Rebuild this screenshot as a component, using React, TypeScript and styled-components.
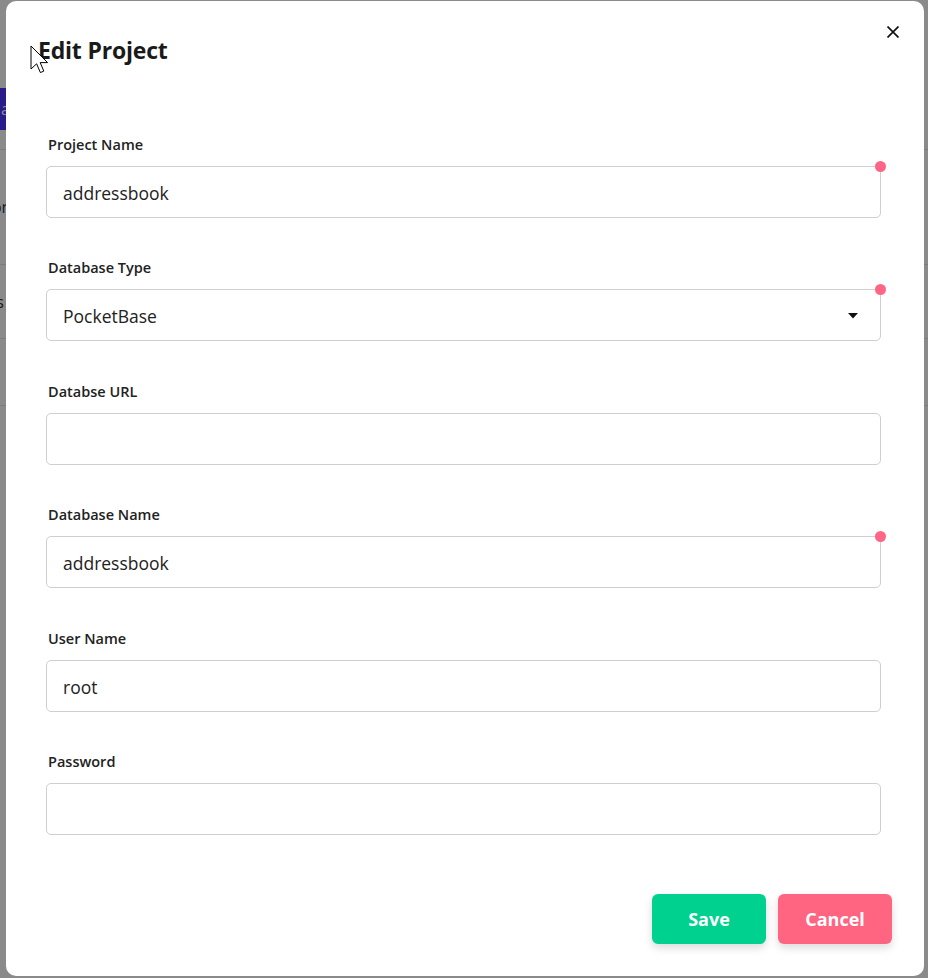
import { createGlobalStyle, styled } from "styled-components";

const GlobalStyle = createGlobalStyle`
  html, body {
    margin: 0;
    padding: 0;
  }
  body {
    font-family: "Open Sans", "Noto Sans", "Liberation Sans", sans-serif;
    color: #222;
    background: #fff;
  }
`;

const Page = styled.div`
  min-height: 978px;
  background: #fff;
`;

const PageHeader = styled.div`
  height: 150px;
  padding-top: 88px;
  box-sizing: border-box;
  border-bottom: 1px solid #e6e6e6;
`;

const PrimaryButton = styled.div`
  display: inline-flex;
  align-items: center;
  justify-content: flex-end;
  height: 42px;
  width: 90px;
  margin-left: -80px;
  background: #4e30ff;
  color: #fff;
  font-size: 16px;
`;

const TableRow = styled.div<{ $h: number }>`
  height: ${(p) => p.$h}px;
  border-bottom: 1px solid #e6e6e6;
  display: flex;
  align-items: center;
  margin-left: -40px;
  font-size: 16px;
  color: #333;
`;

const Overlay = styled.div`
  position: fixed;
  inset: 0;
  background: rgba(0, 0, 0, 0.46);
  display: flex;
  align-items: flex-start;
  padding: 1px 0 0 6px;
`;

const Modal = styled.div`
  position: relative;
  width: 918px;
  height: 975px;
  box-sizing: border-box;
  background: #fff;
  border-radius: 10px;
  padding: 32px 32px;
  display: flex;
  flex-direction: column;
`;

const Title = styled.h2`
  margin: 0;
  font-size: 23px;
  line-height: 35px;
  font-weight: 700;
  color: #1a1a1a;
  letter-spacing: -0.2px;
`;

const CloseButton = styled.button`
  position: absolute;
  top: 25px;
  right: 25px;
  width: 12px;
  height: 12px;
  padding: 0;
  border: none;
  background: none;
  display: flex;
  cursor: pointer;
`;

const Form = styled.form`
  margin: 66px 11px 0 8px;
  display: flex;
  flex-direction: column;
  gap: 39.4px;
`;

const Field = styled.div`
  display: flex;
  flex-direction: column;
`;

const Label = styled.label`
  font-size: 14.5px;
  line-height: 20px;
  font-weight: 600;
  color: #222;
  padding: 1px 0 0 2px;
  margin-bottom: 11px;
`;

const InputWrap = styled.div`
  position: relative;
`;

const Input = styled.input`
  width: 100%;
  height: 52px;
  box-sizing: border-box;
  border: 1px solid #cfcfcf;
  border-radius: 5px;
  padding: 2px 16px 0;
  font-family: inherit;
  font-size: 17.5px;
  color: #222;
  outline: none;
  background: #fff;
`;

const SelectBox = styled.div`
  height: 52px;
  box-sizing: border-box;
  border: 1px solid #cfcfcf;
  border-radius: 5px;
  padding: 2px 22px 0 16px;
  font-size: 17.5px;
  color: #222;
  display: flex;
  align-items: center;
  justify-content: space-between;
`;

const RequiredDot = styled.span`
  position: absolute;
  top: -5.5px;
  right: -4.5px;
  width: 11px;
  height: 11px;
  border-radius: 50%;
  background: #ff6584;
`;

const Footer = styled.div`
  margin-top: 59px;
  display: flex;
  justify-content: flex-end;
  gap: 12px;
`;

const ActionButton = styled.button<{ $color: string }>`
  width: 114px;
  height: 50px;
  border: none;
  border-radius: 6px;
  background: ${(p) => p.$color};
  color: #fff;
  font-family: inherit;
  font-size: 18px;
  font-weight: 700;
  padding-top: 2px;
  box-shadow: 0 4px 8px rgba(0, 0, 0, 0.14);
  cursor: pointer;
`;

const Pointer = styled.svg`
  position: fixed;
  left: 30px;
  top: 45px;
`;

interface FieldDef {
  label: string;
  value: string;
  required?: boolean;
  select?: boolean;
  type?: string;
}

const fields: FieldDef[] = [
  { label: "Project Name", value: "addressbook", required: true },
  { label: "Database Type", value: "PocketBase", required: true, select: true },
  { label: "Databse URL", value: "" },
  { label: "Database Name", value: "addressbook", required: true },
  { label: "User Name", value: "root" },
  { label: "Password", value: "", type: "password" },
];

const App = () => {
  return (
    <>
      <GlobalStyle />
      <Page>
        <PageHeader>
          <PrimaryButton>a</PrimaryButton>
        </PageHeader>
        <TableRow $h={114}>Option</TableRow>
        <TableRow $h={73}>Pages</TableRow>
        <TableRow $h={66} />
      </Page>
      <Overlay>
        <Modal>
          <Title>Edit Project</Title>
          <CloseButton aria-label="Close">
            <svg width="12" height="12" viewBox="0 0 12 12">
              <path d="M0.5 0.5 L11.5 11.5 M11.5 0.5 L0.5 11.5" stroke="#111" strokeWidth="1.7" />
            </svg>
          </CloseButton>
          <Form onSubmit={(e) => e.preventDefault()}>
            {fields.map((f) => (
              <Field key={f.label}>
                <Label>{f.label}</Label>
                <InputWrap>
                  {f.select ? (
                    <SelectBox>
                      <span>{f.value}</span>
                      <svg width="10" height="6" viewBox="0 0 10 6">
                        <path d="M0 0 H10 L5 5.5 Z" fill="#111" />
                      </svg>
                    </SelectBox>
                  ) : (
                    <Input type={f.type || "text"} defaultValue={f.value} />
                  )}
                  {f.required && <RequiredDot />}
                </InputWrap>
              </Field>
            ))}
          </Form>
          <Footer>
            <ActionButton $color="#00d18f">Save</ActionButton>
            <ActionButton $color="#ff6481">Cancel</ActionButton>
          </Footer>
        </Modal>
      </Overlay>
      <Pointer width="20" height="30" viewBox="0 0 20 30">
        <path
          d="M1 1 L1 24 L6.6 18.8 L10.4 27.6 L13.8 26.1 L10.2 17.6 L17.6 17.6 Z"
          fill="#fff"
          stroke="#000"
          strokeWidth="1"
          strokeLinejoin="miter"
        />
      </Pointer>
    </>
  );
};

export default App;
